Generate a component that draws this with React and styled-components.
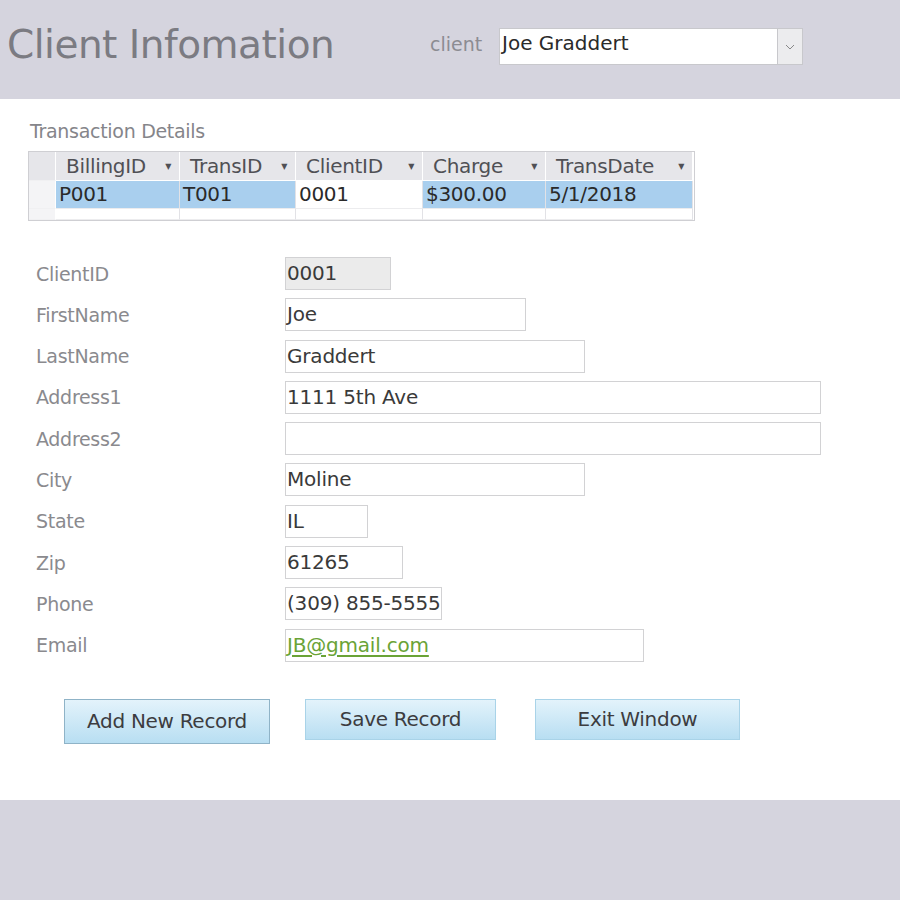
import React from 'react';
import styled, { createGlobalStyle } from 'styled-components';

const Global = createGlobalStyle`
  body {
    margin: 0;
    background: #fff;
    font-family: "DejaVu Sans", "Liberation Sans", sans-serif;
  }
`;

const Page = styled.div`
  width: 900px;
  height: 900px;
  display: flex;
  flex-direction: column;
  overflow: hidden;
`;

const Header = styled.header`
  height: 99px;
  flex: none;
  background: #d5d4de;
  display: flex;
  align-items: flex-start;
  padding-top: 28px;
  box-sizing: border-box;
`;

const Title = styled.h1`
  margin: 0 0 0 7px;
  width: 423px;
  font-size: 39px;
  font-weight: normal;
  color: #7b7b82;
  line-height: 33px;
  letter-spacing: -0.5px;
`;

const ComboLabel = styled.span`
  font-size: 19px;
  color: #8c8c92;
  width: 69px;
  line-height: 32px;
`;

const Combo = styled.div`
  width: 304px;
  height: 37px;
  box-sizing: border-box;
  background: #fff;
  border: 1px solid #c8c8cc;
  display: flex;
`;

const ComboText = styled.span`
  flex: 1;
  padding: 2px 0 0 2px;
  font-size: 20px;
  color: #2a2a2a;
`;

const ComboButton = styled.span`
  width: 24px;
  border-left: 1px solid #c8c8cc;
  background: #ececee;
  display: flex;
  align-items: center;
  justify-content: center;
  color: #888;
`;

const Body = styled.main`
  flex: 1;
  background: #fff;
  padding: 21px 0 0 0;
`;

const Footer = styled.div`
  height: 100px;
  flex: none;
  background: #d5d4de;
`;

const SectionTitle = styled.div`
  margin-left: 30px;
  font-size: 19px;
  color: #85858a;
  letter-spacing: -0.3px;
`;

const Table = styled.div`
  margin: 9px 0 0 28px;
  width: 667px;
  border: 1px solid #cfcfd3;
  box-sizing: border-box;
  display: grid;
  grid-template-columns: 27px 124px 116px 127px 123px 147px;
  grid-template-rows: 29px 28px 11px;
`;

const Cell = styled.div`
  box-sizing: border-box;
  font-size: 20px;
  line-height: 27px;
  padding-left: ${p => (p.$head ? '10px' : '3px')};
  color: ${p => (p.$head ? '#505055' : '#2a2a2a')};
  background: ${p => (p.$head ? '#e6e6ea' : p.$sel ? '#a9cfee' : '#fff')};
  border-right: ${p => (p.$head ? '1px solid #fff' : '1px solid #e2e2e6')};
  border-bottom: ${p => (p.$head ? '1px solid #fff' : '1px solid #ececee')};
  white-space: nowrap;
  display: flex;
  align-items: center;
  justify-content: space-between;
  letter-spacing: -0.3px;
`;

const Arrow = styled.span`
  font-size: 8px;
  margin-right: 8px;
  color: #505055;
`;

const Selector = styled.div`
  background: ${p => (p.$light ? '#f4f4f6' : '#e6e6ea')};
  border-right: 1px solid #fff;
  border-bottom: 1px solid #f0f0f2;
`;

const Form = styled.div`
  margin: 36px 0 0 36px;
  display: grid;
  grid-template-columns: 249px 1fr;
  row-gap: 8.3px;
  align-items: center;
`;

const Label = styled.div`
  font-size: 19px;
  color: #8a8a8e;
  letter-spacing: -0.3px;
`;

const Field = styled.div`
  width: ${p => p.$w}px;
  height: 33px;
  box-sizing: border-box;
  border: 1px solid #d2d2d4;
  background: ${p => (p.$locked ? '#ebebeb' : '#fff')};
  font-size: 20px;
  line-height: 31px;
  padding-left: 1px;
  color: #3a3a3a;
  letter-spacing: -0.2px;
  white-space: nowrap;
`;

const Link = styled.span`
  color: #6aa336;
  text-decoration: underline;
  text-underline-offset: 3px;
`;

const Buttons = styled.div`
  display: flex;
  align-items: flex-start;
  margin: 37px 0 0 64px;
`;

const Button = styled.button`
  width: ${p => p.$w}px;
  height: ${p => (p.$focus ? 45 : 41)}px;
  margin-right: ${p => p.$gap}px;
  font-family: inherit;
  font-size: 20px;
  color: #3c3c40;
  letter-spacing: -0.3px;
  border: 1px solid ${p => (p.$focus ? '#8fb3c7' : '#a9d3e8')};
  background: linear-gradient(#e3f3fb, #b8def2);
  padding: 0;
  cursor: pointer;
`;

const fields = [
  ['ClientID', '0001', 106, true],
  ['FirstName', 'Joe', 241],
  ['LastName', 'Graddert', 300],
  ['Address1', '1111 5th Ave', 536],
  ['Address2', '', 536],
  ['City', 'Moline', 300],
  ['State', 'IL', 83],
  ['Zip', '61265', 118],
  ['Phone', '(309) 855-5555', 157],
];

const heads = ['BillingID', 'TransID', 'ClientID', 'Charge', 'TransDate'];
const row = ['P001', 'T001', '0001', '$300.00', '5/1/2018'];

export default function App() {
  return (
    <Page>
      <Global />
      <Header>
        <Title>Client Infomation</Title>
        <ComboLabel>client</ComboLabel>
        <Combo>
          <ComboText>Joe Graddert</ComboText>
          <ComboButton>
            <svg width="10" height="6" viewBox="0 0 10 6">
              <path d="M1 1l4 4 4-4" fill="none" stroke="#888" strokeWidth="1" />
            </svg>
          </ComboButton>
        </Combo>
      </Header>
      <Body>
        <SectionTitle>Transaction Details</SectionTitle>
        <Table>
          <Selector />
          {heads.map(h => (
            <Cell $head key={h}>
              {h}
              <Arrow>▼</Arrow>
            </Cell>
          ))}
          <Selector $light />
          {row.map((v, i) => (
            <Cell key={i} $sel={i !== 2}>{v}</Cell>
          ))}
          <Selector $light />
          {row.map((v, i) => (
            <Cell key={'n' + i} />
          ))}
        </Table>
        <Form>
          {fields.map(([label, value, w, locked]) => (
            <React.Fragment key={label}>
              <Label>{label}</Label>
              <Field $w={w} $locked={locked}>{value}</Field>
            </React.Fragment>
          ))}
          <Label>Email</Label>
          <Field $w={359}>
            <Link>JB@gmail.com</Link>
          </Field>
        </Form>
        <Buttons>
          <Button $w={206} $gap={35} $focus>Add New Record</Button>
          <Button $w={191} $gap={39}>Save Record</Button>
          <Button $w={205} $gap={0}>Exit Window</Button>
        </Buttons>
      </Body>
      <Footer />
    </Page>
  );
}
